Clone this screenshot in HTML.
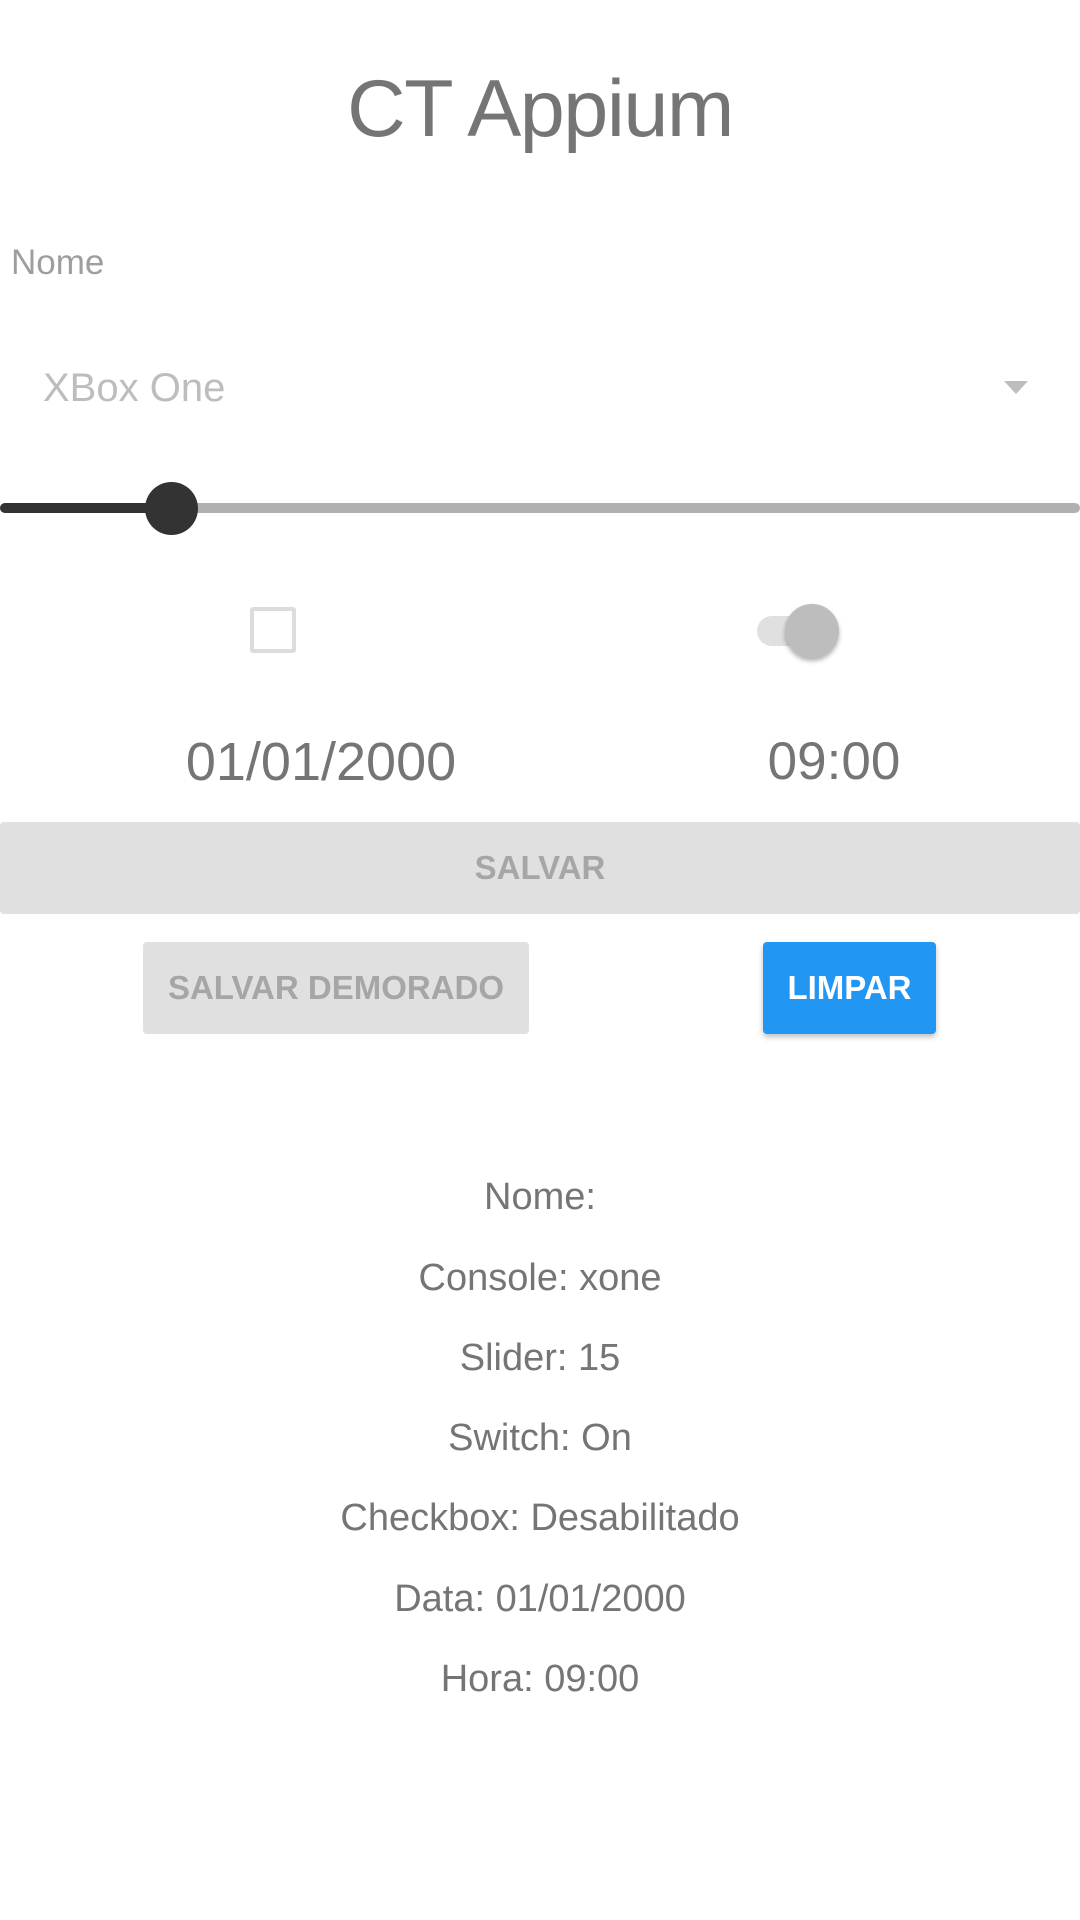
<!DOCTYPE html>
<html><head><meta charset="utf-8"><style>
*{margin:0;padding:0;box-sizing:border-box}
body{width:1080px;height:1920px;background:#fff;position:relative;overflow:hidden;font-family:"Liberation Sans",sans-serif;color:#757575}
.t{position:absolute;white-space:nowrap;transform:translateX(-50%);text-align:center}
.r{position:absolute;left:540px;transform:translateX(-50%);font-size:38px;line-height:50px;white-space:nowrap}
.btn{position:absolute;border-radius:4px;font-weight:bold;font-size:33px;display:flex;align-items:center;justify-content:center}
</style></head><body>
<div class="t" style="left:540px;top:59px;font-size:81px;line-height:100px;letter-spacing:-1.5px">CT Appium</div>
<div style="position:absolute;left:11px;top:243px;font-size:35px;line-height:40px;color:#9e9e9e">Nome</div>
<div style="position:absolute;left:43px;top:364px;font-size:40px;line-height:48px;color:#bdbdbd">XBox One</div>
<div style="position:absolute;left:1004px;top:381px;width:0;height:0;border-left:12px solid transparent;border-right:12px solid transparent;border-top:13px solid #bdbdbd"></div>
<div style="position:absolute;left:0;top:503px;width:1080px;height:10px;border-radius:5px;background:#b0b0b0"></div>
<div style="position:absolute;left:0;top:503px;width:171px;height:10px;border-radius:5px;background:#333"></div>
<div style="position:absolute;left:145px;top:482px;width:53px;height:53px;border-radius:50%;background:#333"></div>
<div style="position:absolute;left:250px;top:607px;width:46px;height:46px;border:4px solid #dcdcdc;border-radius:3px"></div>
<div style="position:absolute;left:757px;top:616px;width:72px;height:30px;border-radius:15px;background:#e0e0e0"></div>
<div style="position:absolute;left:785px;top:604px;width:54px;height:54px;border-radius:50%;background:#bdbdbd;box-shadow:0 3px 5px rgba(0,0,0,.3)"></div>
<div class="t" style="left:321px;top:730px;font-size:54px;line-height:64px">01/01/2000</div>
<div class="t" style="left:834px;top:730px;font-size:53px;line-height:64px">09:00</div>
<div class="btn" style="left:0;top:822px;width:1080px;height:92px;background:#e0e0e0;color:#a6a6a6">SALVAR</div>
<div class="btn" style="left:143px;top:942px;width:386px;height:92px;background:#e0e0e0;color:#a6a6a6;font-size:33px">SALVAR DEMORADO</div>
<div class="btn" style="left:763px;top:942px;width:173px;height:92px;background:#2196f3;color:#fff;box-shadow:0 3px 6px rgba(0,0,0,.25)">LIMPAR</div>
<div class="r" style="top:1172px">Nome:</div>
<div class="r" style="top:1253px">Console: xone</div>
<div class="r" style="top:1333px">Slider: 15</div>
<div class="r" style="top:1413px">Switch: On</div>
<div class="r" style="top:1493px">Checkbox: Desabilitado</div>
<div class="r" style="top:1574px">Data: 01/01/2000</div>
<div class="r" style="top:1654px">Hora: 09:00</div>
</body></html>
